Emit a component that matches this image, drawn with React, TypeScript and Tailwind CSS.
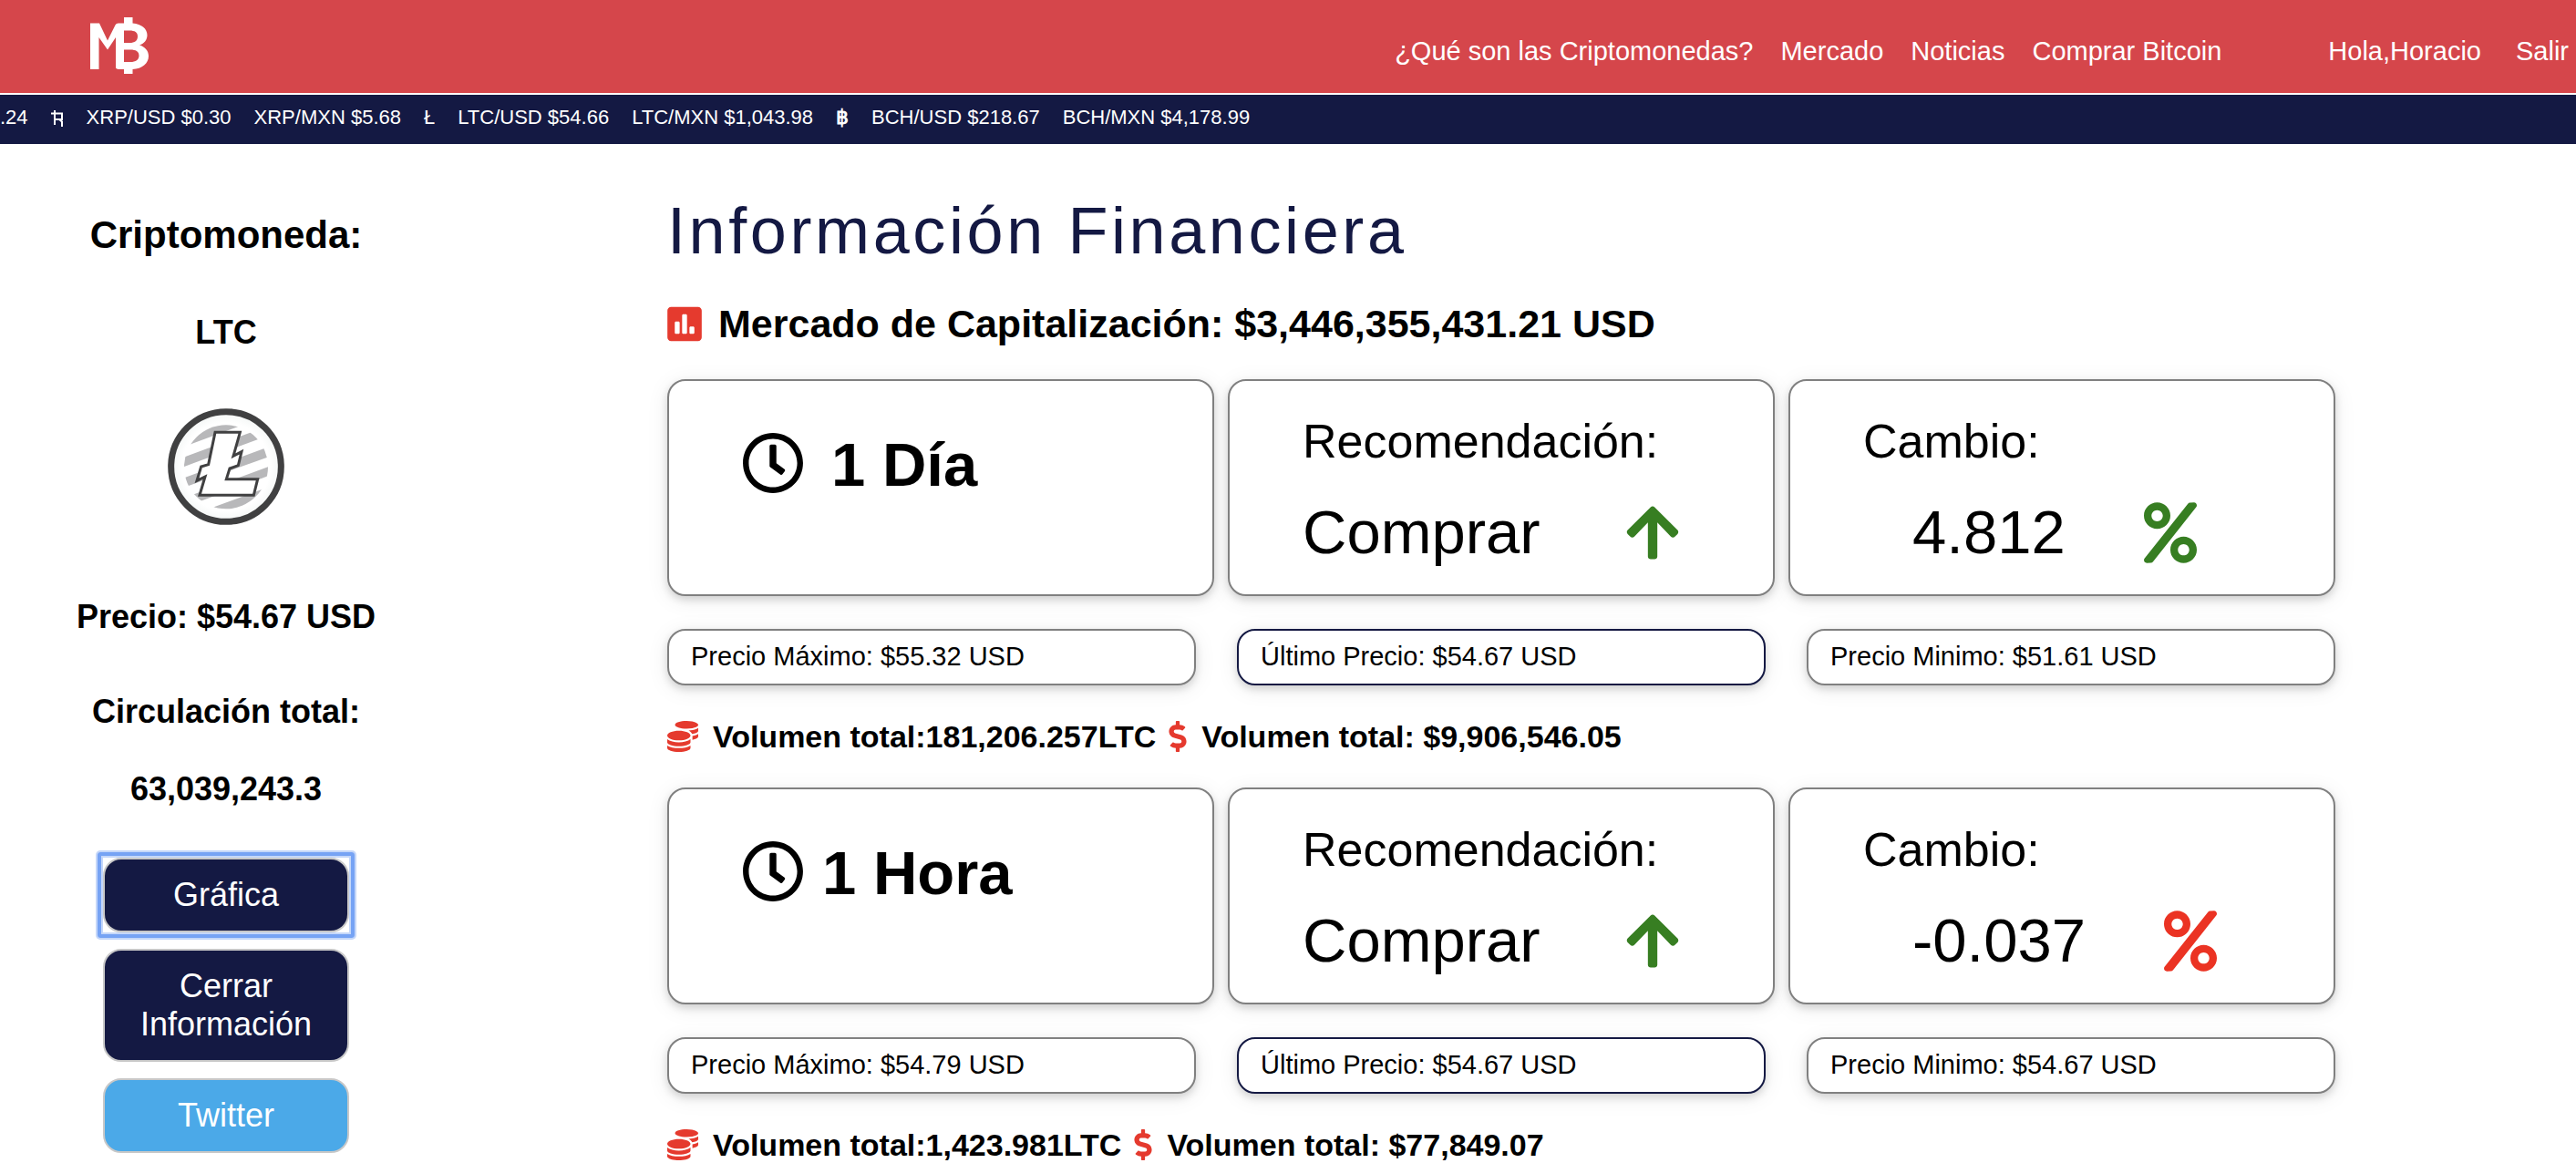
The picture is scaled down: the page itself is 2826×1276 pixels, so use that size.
import type { ReactNode } from "react";
import {
  FaArrowUp,
  FaCoins,
  FaDollarSign,
  FaPercent,
  FaPoll,
  FaRegClock,
} from "react-icons/fa";

type Period = {
  title: string;
  titleGap: string;
  recommendation: string;
  change: string;
  changeColor: string;
  max: string;
  last: string;
  min: string;
  volumeCoin: string;
  volumeUsd: string;
};

const periods: Period[] = [
  {
    title: "1 Día",
    titleGap: "gap-[30px]",
    recommendation: "Comprar",
    change: "4.812",
    changeColor: "text-[#377e22]",
    max: "$55.32 USD",
    last: "$54.67 USD",
    min: "$51.61 USD",
    volumeCoin: "181,206.257LTC",
    volumeUsd: "$9,906,546.05",
  },
  {
    title: "1 Hora",
    titleGap: "gap-5",
    recommendation: "Comprar",
    change: "-0.037",
    changeColor: "text-[#eb3323]",
    max: "$54.79 USD",
    last: "$54.67 USD",
    min: "$54.67 USD",
    volumeCoin: "1,423.981LTC",
    volumeUsd: "$77,849.07",
  },
];

function Logo() {
  return (
    <svg viewBox="99 19 64 62" className="h-[62px] w-16" role="img" aria-label="Mercado Bitcoin">
      <path
        fill="#fff"
        fillRule="evenodd"
        d="M99 25.5h10l9 19 8-16q1-3 4-3h6V19h9.500v6.500c10 1 16 6 16 13 0 5-3 9-8.500 11 6.500 2 10 6.500 10 12 0 8-7 14-17.500 14.500V81H136v-5h-4q-5 0-5-2V41l-9 13.500L108.500 41v35H99zM136 33.500V47h6c6 0 9-2.500 9-7s-3-6.500-9-6.500zM136 54.500V68h7c6 0 9.500-2.500 9.500-7s-3.500-6.500-9.500-6.500z"
      />
    </svg>
  );
}

function RippleSign() {
  return (
    <svg
      viewBox="0 0 14 20"
      className="mt-1 h-5 w-3.5 shrink-0"
      fill="none"
      stroke="currentColor"
      strokeWidth="2"
      role="img"
      aria-label="XRP"
    >
      <path d="M0 4.500H12V11H4M4 1V17M9 11L12 13.500V19" />
    </svg>
  );
}

function LitecoinMark() {
  return (
    <svg viewBox="0 0 384 384" className="size-32" role="img" aria-label="Litecoin">
      <defs>
        <radialGradient id="coin-face">
          <stop offset="0.8" stopColor="#ffffff" />
          <stop offset="1" stopColor="#f3f6f5" />
        </radialGradient>
        <clipPath id="coin-inner">
          <circle cx="192" cy="193" r="138" />
        </clipPath>
      </defs>
      <circle cx="192" cy="192" r="181" fill="url(#coin-face)" stroke="#404041" strokeWidth="21" />
      <g clipPath="url(#coin-inner)" fill="#b8b8ba">
        <path d="M40 131 350 17V0H40z" />
        <path d="M40 166 350 51v32L40 197z" />
        <path d="M40 234 350 120v33L40 265z" />
        <path d="M40 300 350 185v30L40 331z" />
        <path d="M40 366 350 252v132H40z" />
      </g>
      <path
        d="M156 79H238L216 157 243 143 232 188 204 198 193 233H296L283 286H105L123 225 96 238 110 192 134 185z"
        fill="#fff"
        stroke="#404041"
        strokeWidth="9"
      />
    </svg>
  );
}

function Card({ children }: { children: ReactNode }) {
  return (
    <div className="rounded-[20px] border-2 border-[#808080] bg-white px-20 shadow-[0_4px_8px_rgba(0,0,0,0.14),0_4px_24px_rgba(0,0,0,0.08)]">
      {children}
    </div>
  );
}

function Pill({ children, active = false }: { children: ReactNode; active?: boolean }) {
  return (
    <div
      className={`rounded-[20px] border-2 bg-white px-6 pt-3 pb-3.5 text-[29px] leading-8 shadow-[0_4px_8px_rgba(0,0,0,0.14),0_4px_24px_rgba(0,0,0,0.08)] ${
        active ? "border-[#141943]" : "border-[#808080]"
      }`}
    >
      {children}
    </div>
  );
}

function PeriodSection({ p }: { p: Period }) {
  return (
    <section>
      <div className="grid grid-cols-3 gap-[15px]">
        <Card>
          <h2 className={`flex items-start pt-[54px] text-[67px] leading-[76px] font-bold ${p.titleGap}`}>
            <FaRegClock className="mt-0.5 size-[68px] shrink-0" />
            {p.title}
          </h2>
        </Card>
        <Card>
          <div className="pt-9 text-[52px] leading-[60px]">Recomendación:</div>
          <div className="flex items-center gap-[94px] pt-8 pb-[30px] text-[67px] leading-[76px]">
            {p.recommendation}
            <FaArrowUp className="h-[67px] w-[58px] shrink-0 text-[#377e22]" />
          </div>
        </Card>
        <Card>
          <div className="pt-9 text-[52px] leading-[60px]">Cambio:</div>
          <div className="flex items-center gap-[86px] pt-8 pb-[30px] pl-[54px] text-[67px] leading-[76px]">
            {p.change}
            <FaPercent className={`h-[67px] w-[58px] shrink-0 ${p.changeColor}`} />
          </div>
        </Card>
      </div>
      <div className="mt-9 grid grid-cols-3 gap-[45px]">
        <Pill>Precio Máximo: {p.max}</Pill>
        <Pill active>Último Precio: {p.last}</Pill>
        <Pill>Precio Minimo: {p.min}</Pill>
      </div>
      <div className="my-9 flex items-center text-[34px] leading-10 font-bold">
        <FaCoins className="size-[34px] shrink-0 text-[#e53a2e]" />
        <span className="ml-4">Volumen total:{p.volumeCoin}</span>
        <FaDollarSign className="ml-3.5 h-[34px] w-5 shrink-0 text-[#e53a2e]" />
        <span className="ml-4">Volumen total: {p.volumeUsd}</span>
      </div>
    </section>
  );
}

const buttonClass =
  "w-[270px] rounded-[20px] border-2 border-[#c8c8c8] px-5 py-[18px] text-center text-[36px] leading-[42px] text-white";

const focusRing =
  "relative outline-none after:absolute after:-inset-2 after:rounded-[3px] after:border-4 after:border-[#76a3f4] after:shadow-[0_0_0_2px_#c5d7f9,inset_0_0_0_2px_#c5d7f9]";

export default function App() {
  return (
    <div className="h-screen overflow-hidden bg-white font-['Liberation_Sans',Arial,sans-serif] text-black">
      <header className="flex h-[104px] items-start justify-between border-b-2 border-white bg-[#d5464b] pt-[19px] pr-2 pl-[99px] text-[29px] leading-8 text-white">
        <a href="#inicio">
          <Logo />
        </a>
        <nav className="flex gap-[30px] pt-[21px] whitespace-nowrap">
          <a href="#que-son">¿Qué son las Criptomonedas?</a>
          <a href="#mercado">Mercado</a>
          <a href="#noticias">Noticias</a>
          <a href="#comprar">Comprar Bitcoin</a>
          <a href="#perfil" className="ml-[87px]">
            Hola,Horacio
          </a>
          <a href="#salir" className="ml-2">
            Salir
          </a>
        </nav>
      </header>
      <div className="flex h-[54px] gap-[25px] overflow-hidden bg-[#141943] pt-3 text-[22px] leading-[26px] whitespace-nowrap text-white">
        <span>.24</span>
        <RippleSign />
        <span>XRP/USD $0.30</span>
        <span>XRP/MXN $5.68</span>
        <span>Ł</span>
        <span>LTC/USD $54.66</span>
        <span>LTC/MXN $1,043.98</span>
        <span className="font-bold">฿</span>
        <span>BCH/USD $218.67</span>
        <span>BCH/MXN $4,178.99</span>
      </div>
      <div className="flex items-start">
        <aside className="flex w-[496px] shrink-0 flex-col items-center pt-[76px] text-[36px] leading-[42px] font-bold">
          <h2 className="text-[42px] leading-[48px]">Criptomoneda:</h2>
          <div className="mt-[62px]">LTC</div>
          <div className="mt-[62px]">
            <LitecoinMark />
          </div>
          <div className="mt-20">Precio: $54.67 USD</div>
          <div className="mt-[62px]">Circulación total:</div>
          <div className="mt-[43px]">63,039,243.3</div>
          <div className="mt-[54px] flex flex-col gap-[18px] font-normal">
            <button type="button" className={`${buttonClass} ${focusRing} bg-[#141943]`}>
              Gráfica
            </button>
            <button type="button" className={`${buttonClass} bg-[#141943]`}>
              Cerrar Información
            </button>
            <button type="button" className={`${buttonClass} bg-[#4ba9e8]`}>
              Twitter
            </button>
          </div>
        </aside>
        <main className="mr-[264px] ml-[236px] min-w-0 flex-1 pt-[55px]">
          <h1 className="text-[72px] leading-[80px] tracking-wider text-[#141943]">
            Información Financiera
          </h1>
          <div className="mt-[38px] mb-[37px] flex items-center gap-[18px] text-[43px] leading-[48px] font-bold">
            <FaPoll className="h-[43px] w-[38px] shrink-0 text-[#e53a2e]" />
            Mercado de Capitalización: $3,446,355,431.21 USD
          </div>
          {periods.map((p) => (
            <PeriodSection key={p.title} p={p} />
          ))}
        </main>
      </div>
    </div>
  );
}
